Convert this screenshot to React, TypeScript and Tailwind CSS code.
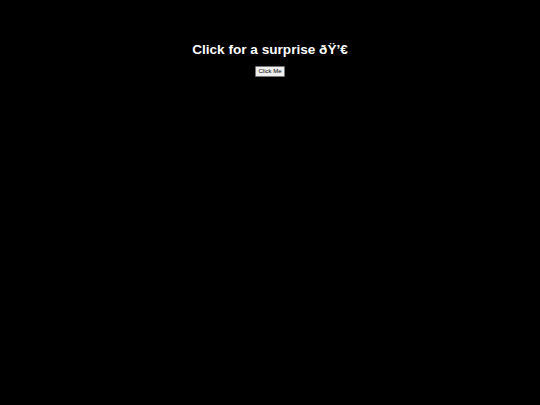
export default function App() {
  return (
    <div className="flex min-h-[405px] flex-col items-center bg-black px-2 pt-[42px] text-center font-['Liberation_Sans',Arial,sans-serif] text-white">
      <h1 className="text-[13.6px] font-bold leading-[16px]">Click for a surprise ðŸ’€</h1>
      <button
        type="button"
        className="mt-[8px] rounded-[1px] border border-[#767676] bg-[#efefef] px-[2px] py-[1px] text-[6px] leading-[6.5px] text-black"
      >
        Click Me
      </button>
    </div>
  )
}
